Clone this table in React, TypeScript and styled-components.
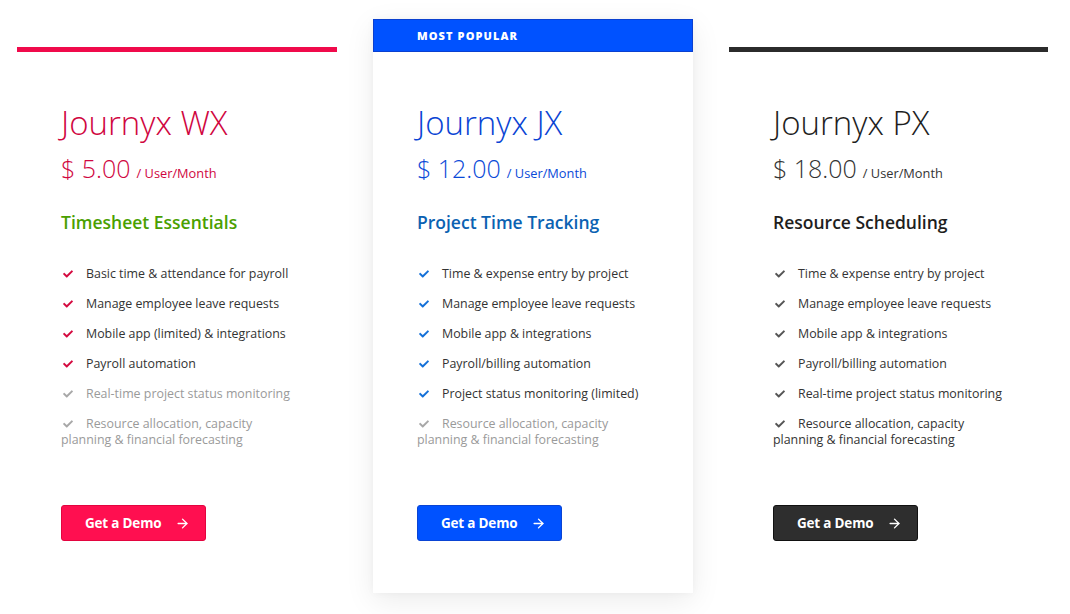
import React from "react";
import styled, { createGlobalStyle, css } from "styled-components";
import { FaCheck } from "react-icons/fa";
import { ArrowRight } from "lucide-react";

const GlobalStyle = createGlobalStyle`
  html, body { margin: 0; padding: 0; background: #ffffff; }
  body { font-family: "Open Sans", "Liberation Sans", sans-serif; }
  * { box-sizing: border-box; }
`;

type Variant = "wx" | "jx" | "px";

const theme: Record<Variant, {
  bar: string; title: string; price: string; sub: string;
  check: string; btn: string; btnBorder: string;
}> = {
  wx: { bar: "#f00a4b", title: "#d0063f", price: "#d0063f", sub: "#4aa000", check: "#d40a40", btn: "#ff0f50", btnBorder: "#e3043f" },
  jx: { bar: "#0052ff", title: "#0a44d4", price: "#0a4ad8", sub: "#0b62b2", check: "#1470d8", btn: "#0052ff", btnBorder: "#0a44d4" },
  px: { bar: "#2b2b2b", title: "#1e1e1e", price: "#333333", sub: "#1e1e1e", check: "#555555", btn: "#2e2e2e", btnBorder: "#111111" },
};

const Page = styled.div`
  display: grid;
  grid-template-columns: 320px 320px 319px;
  column-gap: 36px;
  padding: 19px 0 0 17px;
  width: 1070px;
  height: 614px;
  overflow: hidden;
  align-items: start;
`;

const Card = styled.div<{ $popular?: boolean }>`
  display: flex;
  flex-direction: column;
  background: #fff;
  ${(p) => p.$popular && css`
    box-shadow: 0 8px 28px rgba(0, 0, 0, 0.08), 0 0 8px rgba(0, 0, 0, 0.035);
  `}
`;

const TopBar = styled.div<{ $v: Variant }>`
  height: 5px;
  margin-top: 28px;
  background: ${(p) => theme[p.$v].bar};
`;

const PopularBar = styled.div`
  height: 33px;
  background: #0052ff;
  border: 1px solid #0a40d0;
  display: flex;
  align-items: center;
  padding-left: 43px;
  color: #fff;
  font-weight: 800;
  font-size: 11px;
  letter-spacing: 1.1px;
  text-transform: uppercase;
`;

const Body = styled.div`
  display: flex;
  flex-direction: column;
  padding: 50px 20px 52px 44px;
`;

const Title = styled.h2<{ $v: Variant }>`
  margin: 0 0 10px;
  font-size: 33px;
  line-height: 41px;
  font-weight: 300;
  color: ${(p) => theme[p.$v].title};
`;

const PriceRow = styled.div<{ $v: Variant }>`
  display: flex;
  align-items: baseline;
  gap: 6px;
  color: ${(p) => theme[p.$v].price};
  line-height: 30px;
`;

const Amount = styled.span`
  font-size: 25px;
  font-weight: 300;
`;

const Per = styled.span`
  font-size: 12.8px;
  font-weight: 400;
`;

const Sub = styled.h3<{ $v: Variant }>`
  margin: 22px 0 32px;
  font-size: 17.5px;
  line-height: 24px;
  font-weight: 600;
  color: ${(p) => theme[p.$v].sub};
`;

const List = styled.ul`
  list-style: none;
  margin: 0;
  padding: 0;
  display: flex;
  flex-direction: column;
  gap: 14px;
`;

const Item = styled.li<{ $off?: boolean }>`
  font-size: 12.4px;
  line-height: 16px;
  color: ${(p) => (p.$off ? "#9a9a9a" : "#333333")};
  max-width: 236px;
`;

const Check = styled.span<{ $c: string }>`
  display: inline-block;
  width: 11px;
  margin: 0 12px 0 2px;
  color: ${(p) => p.$c};
  vertical-align: -1px;
  svg { display: block; }
`;

const Button = styled.a<{ $v: Variant }>`
  margin-top: 57px;
  align-self: flex-start;
  display: inline-flex;
  align-items: center;
  height: 36px;
  width: 145px;
  padding: 0 15px 0 23px;
  justify-content: space-between;
  background: ${(p) => theme[p.$v].btn};
  border: 1px solid ${(p) => theme[p.$v].btnBorder};
  border-radius: 3px;
  color: #fff;
  font-size: 13.5px;
  font-weight: 700;
  text-decoration: none;
  letter-spacing: -0.2px;
`;

type Feature = { text: string; off?: boolean };
type Plan = { v: Variant; name: string; price: string; sub: string; features: Feature[]; popular?: boolean };

const plans: Plan[] = [
  {
    v: "wx", name: "Journyx WX", price: "$ 5.00", sub: "Timesheet Essentials",
    features: [
      { text: "Basic time & attendance for payroll" },
      { text: "Manage employee leave requests" },
      { text: "Mobile app (limited) & integrations" },
      { text: "Payroll automation" },
      { text: "Real-time project status monitoring", off: true },
      { text: "Resource allocation, capacity planning & financial forecasting", off: true },
    ],
  },
  {
    v: "jx", name: "Journyx JX", price: "$ 12.00", sub: "Project Time Tracking", popular: true,
    features: [
      { text: "Time & expense entry by project" },
      { text: "Manage employee leave requests" },
      { text: "Mobile app & integrations" },
      { text: "Payroll/billing automation" },
      { text: "Project status monitoring (limited)" },
      { text: "Resource allocation, capacity planning & financial forecasting", off: true },
    ],
  },
  {
    v: "px", name: "Journyx PX", price: "$ 18.00", sub: "Resource Scheduling",
    features: [
      { text: "Time & expense entry by project" },
      { text: "Manage employee leave requests" },
      { text: "Mobile app & integrations" },
      { text: "Payroll/billing automation" },
      { text: "Real-time project status monitoring" },
      { text: "Resource allocation, capacity planning & financial forecasting" },
    ],
  },
];

export default function App() {
  return (
    <>
      <GlobalStyle />
      <Page>
        {plans.map((p) => (
          <Card key={p.name} $popular={p.popular}>
            {p.popular ? <PopularBar>Most Popular</PopularBar> : <TopBar $v={p.v} />}
            <Body>
              <Title $v={p.v}>{p.name}</Title>
              <PriceRow $v={p.v}>
                <Amount>{p.price}</Amount>
                <Per>/ User/Month</Per>
              </PriceRow>
              <Sub $v={p.v}>{p.sub}</Sub>
              <List>
                {p.features.map((f) => (
                  <Item key={f.text} $off={f.off}>
                    <Check $c={f.off ? "#a8a8a8" : theme[p.v].check}>
                      <FaCheck size={10} />
                    </Check>
                    {f.text}
                  </Item>
                ))}
              </List>
              <Button $v={p.v} href="#">
                Get a Demo
                <ArrowRight size={15} strokeWidth={2.2} />
              </Button>
            </Body>
          </Card>
        ))}
      </Page>
    </>
  );
}
